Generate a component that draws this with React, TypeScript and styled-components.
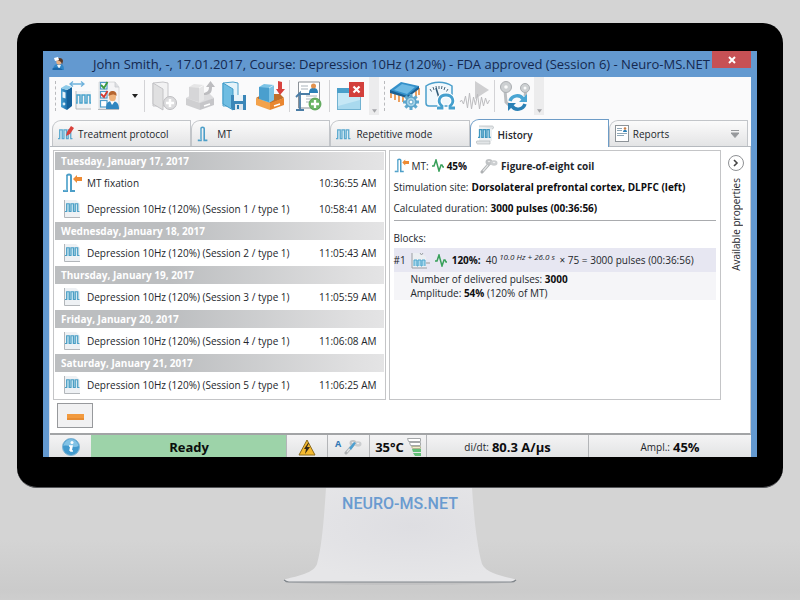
import React from 'react';
import styled, { createGlobalStyle, css } from 'styled-components';

const GlobalStyle = createGlobalStyle`
  * { box-sizing: border-box; }
  body {
    margin: 0;
    background: #d4d4d4;
    font-family: "Open Sans", "Noto Sans", sans-serif;
    font-size: 10px;
    line-height: 14px;
    color: #23262b;
  }
  button { font: inherit; color: inherit; }
  svg { display: block; flex: none; }
`;

const Page = styled.main`
  min-height: 100vh;
  padding-top: 23px;
  background: linear-gradient(#d4d4d4 540px, #cbcbcb 590px, #cecece);
  overflow: hidden;
`;
const Monitor = styled.section`
  margin: 0 17px;
  padding: 28px 26px 30px;
  background: #000;
  border-radius: 20px;
  border-bottom: 1px solid #55565a;
`;
const Screen = styled.div`
  background: #6399d0;
  padding: 0 6px;
`;
const TitleBar = styled.header`
  display: flex;
  align-items: center;
  height: 26px;
  padding: 0 0 0 3px;
  color: #14284f;
`;
const Title = styled.h1`
  flex: 1;
  margin: 0 0 0 27px;
  font-size: 13px;
  line-height: 26px;
  font-weight: 400;
  white-space: nowrap;
`;
const CloseButton = styled.button`
  flex: none;
  align-self: flex-start;
  display: grid;
  place-items: center;
  width: 39px;
  height: 17px;
  margin-left: -8px;
  padding: 0;
  border: 0;
  background: #c75155;
`;
const Client = styled.div`
  background: #fafafb;
  border-left: 1px solid #dfe3e8;
`;
const ToolbarRow = styled.div`
  display: flex;
  height: 38px;
`;
const Grip = styled.span`
  width: 3px;
  margin: 4px 0 4px 5px;
  border-left: 1px dashed #b9babd;
`;
const ToolGroup = styled.div`
  display: flex;
  align-items: center;
`;
const ToolButton = styled.button`
  display: grid;
  place-items: center;
  width: 35px;
  height: 38px;
  padding: 0;
  border: 0;
  background: none;
`;
const CaretButton = styled(ToolButton)`
  width: 14px;
`;
const Separator = styled.span`
  width: 1px;
  height: 32px;
  margin: 0 2px;
  background: #d3d3d6;
`;
const Overflow = styled.button`
  display: flex;
  align-items: flex-end;
  justify-content: center;
  width: 10px;
  height: 38px;
  margin-left: 2px;
  padding: 0 0 2px;
  border: 0;
  background: #ececed;
`;
const TabStrip = styled.div`
  display: flex;
  align-items: flex-end;
  height: 32px;
  padding: 0 3px 0 2px;
  border-bottom: 1px solid #b5b9be;
`;
const Tab = styled.button<{ $active?: boolean }>`
  flex: 1;
  display: flex;
  align-items: center;
  gap: 4px;
  height: 26px;
  padding: 0 8px 0 5px;
  border: 1px solid #c2c5c9;
  border-bottom: 0;
  border-radius: 9px 1px 0 0;
  background: linear-gradient(#fbfbfb, #ededee 60%, #e3e4e5);
  white-space: nowrap;
  ${p => p.$active && css`
    height: 28px;
    margin-bottom: -1px;
    padding-top: 3px;
    border-color: #6d9cc7;
    background: #fff;
    font-weight: 600;
  `}
`;
const TabMore = styled.span`
  margin-left: auto;
`;
const Body = styled.div`
  padding: 3px 0 5px 3px;
  background: #fff;
  border-right: 1px solid #c9ccd0;
  border-bottom: 2px solid #a2a4a6;
`;
const Columns = styled.div`
  display: grid;
  grid-template-columns: 1fr 1fr 26px;
  column-gap: 3px;
`;
const HistoryPanel = styled.section`
  border: 1px solid #c4c5c7;
  padding: 1px;
`;
const DayHeader = styled.h2`
  height: 18px;
  margin: 0;
  padding-left: 6px;
  font-size: 10px;
  line-height: 18px;
  font-weight: 700;
  color: #fff;
  background: linear-gradient(90deg, #bcbec0 35%, #dfdfe0 90%, #e4e4e5);
`;
const Entries = styled.ul`
  margin: 0;
  padding: 0;
  list-style: none;
`;
const Entry = styled.li`
  display: flex;
  align-items: center;
  height: 26px;
  padding: 0 7px 0 6px;
  white-space: nowrap;
`;
const EntryIcon = styled.span`
  display: grid;
  place-items: center;
  width: 22px;
  margin-right: 4px;
`;
const EntryTime = styled.time`
  margin-left: auto;
`;
const DetailPanel = styled.section`
  border: 1px solid #c4c5c7;
  padding: 4px 4px 0;
  white-space: nowrap;
`;
const InfoRow = styled.p`
  display: flex;
  align-items: center;
  gap: 3px;
  height: 21px;
  margin: 0;
`;
const CoilName = styled.span`
  display: flex;
  align-items: center;
  gap: 3px;
  margin-left: 10px;
  font-weight: 700;
`;
const Rule = styled.hr`
  margin: 2px 0 10px;
  border: 0;
  border-top: 1px solid #a9abae;
`;
const BlocksLabel = styled.h3`
  height: 17px;
  margin: 0;
  font-size: 10px;
  line-height: 14px;
  font-weight: 400;
`;
const BlockRow = styled.div`
  display: flex;
  align-items: center;
  gap: 5px;
  height: 24px;
  background: #e7e7f2;
`;
const Formula = styled.span`
  sup {
    font-size: 8px;
    line-height: 0;
    font-style: italic;
    vertical-align: 4px;
    margin: 0 2px;
  }
`;
const BlockDetails = styled.div`
  padding: 0 0 0 17px;
  background: #f5f5f8;
`;
const Side = styled.aside`
  display: flex;
  flex-direction: column;
  align-items: center;
  gap: 7px;
  padding: 5px 3px 0 0;
`;
const RoundButton = styled.button`
  display: grid;
  place-items: center;
  width: 16px;
  height: 16px;
  padding: 0;
  border: 1px solid #8f9194;
  border-radius: 50%;
  background: #fff;
`;
const SideLabel = styled.span`
  writing-mode: vertical-rl;
  transform: rotate(180deg);
  white-space: nowrap;
`;
const RemoveButton = styled.button`
  display: grid;
  place-items: center;
  width: 36px;
  height: 25px;
  margin: 3px 0 0 4px;
  padding: 3px 0 0;
  border: 1px solid #97999c;
  background: #f1f1f2;
`;
const StatusBar = styled.footer`
  display: flex;
  height: 22px;
  background: linear-gradient(#f4f4f5, #e2e3e4);
  white-space: nowrap;
`;
const StatusCell = styled.div<{ $basis?: number; $grow?: number }>`
  display: flex;
  align-items: center;
  justify-content: center;
  gap: 3px;
  flex: ${p => p.$grow ?? 0} 0 ${p => p.$basis ?? 0}px;
  padding-top: 2px;
  border-left: 1px solid #b3b5b8;
  &:first-child { border-left: 0; }
`;
const ReadyCell = styled(StatusCell)`
  background: #9dd3a9;
  border-color: #9dd3a9;
  font-size: 13px;
  font-weight: 700;
  color: #0b0d0c;
`;
const Big = styled.strong`
  font-size: 13px;
  font-weight: 700;
  color: #0d0d0f;
`;
const CoilMode = styled.span`
  align-self: flex-start;
  font-size: 9px;
  font-weight: 700;
  color: #2f77b5;
`;
const Strong = styled.strong`
  font-weight: 700;
  color: #0d0d0f;
`;
const Stand = styled.div`
  display: grid;
  justify-items: center;
  > * { grid-area: 1 / 1; }
`;
const Brand = styled.p`
  z-index: 1;
  margin: 6px 0 0;
  font-family: Roboto, "Open Sans", sans-serif;
  font-size: 16px;
  line-height: 20px;
  font-weight: 500;
  color: #6a9bd0;
`;

/* ---------- icons ---------- */

const TrainPath = 'M0 12h2V1h3v11h2V1h3v11h2V1h3v11h2';

const UserIcon = () => (
  <svg width="14" height="14" viewBox="0 0 14 14">
    <path d="M1 13c0-4 2-6 6-6s5 2 5 6z" fill="#2f86c8" />
    <path d="M5 8l2 4 2-4z" fill="#e8f3fb" />
    <ellipse cx="7" cy="4.500" rx="2.700" ry="3.300" fill="#e9b184" />
    <path d="M5 2c2-2 6-1 6 2l-1 4c0-3-2-4-5-5z" fill="#5b3a27" />
    <path d="M2 1l4-1 1 3-4 1z" fill="#fff" />
    <path d="M0 12c3-2 7-2 11 1H1z" fill="#1a66a9" />
  </svg>
);

const ProtocolIcon = () => (
  <svg width="32" height="32" viewBox="0 0 32 32">
    <defs>
      <linearGradient id="binder" x2="1"><stop stopColor="#4aa3d6" /><stop offset="1" stopColor="#1c6fab" /></linearGradient>
    </defs>
    <path d="M10 4h14M13 1.500L10 4l3 2.500M21 1.500L24 4l-3 2.500" fill="none" stroke="#6fb2dc" strokeWidth="1.300" />
    <path d="M1 8l6 2v20l-6-3z" fill="url(#binder)" />
    <path d="M7 10l5-3v19l-5 4z" fill="#14609a" />
    <path d="M1 8l5-3 6 2-5 3z" fill="#8fcbe9" />
    <path d="M2.500 11.500l3 1v6l-3-1z" fill="#e7f3fa" />
    <circle cx="4" cy="24" r="1.400" fill="#d7ecf8" />
    <path d="M16 11h15v18H16z" fill="#f1f3f5" />
    <path d="M16 11v18h15" fill="none" stroke="#b6babe" />
    <path d="M16 23h1v-8h3v8h2v-8h3v8h2v-8h3v8h1" fill="none" stroke="#48a3cc" strokeWidth="1.500" />
  </svg>
);

const ChecklistIcon = () => (
  <svg width="32" height="32" viewBox="0 0 32 32">
    <path d="M4 2h16l4 5v22H4z" fill="#f4f4f6" stroke="#d0d3d6" strokeWidth=".8" />
    <path d="M20 2v5h4" fill="#dcdee1" stroke="#c9ccd0" strokeWidth=".8" />
    {[2, 11, 20].map(y => (
      <rect key={y} x="5.500" y={y + 0.5} width="6.500" height="6.500" fill="#fff" stroke="#4f9cc9" strokeWidth="1.200" />
    ))}
    <path d="M6 5l3 3 3.500-6" fill="none" stroke="#3c9a3f" strokeWidth="1.800" />
    <path d="M6 14l3 3 3.500-6" fill="none" stroke="#d33a31" strokeWidth="1.800" />
    <path d="M11 29c0-6 2-8 6-8s7 2 7 8z" fill="#2f86c0" />
    <path d="M15 21l2 4 3-4z" fill="#fff" />
    <ellipse cx="17.500" cy="17" rx="3.500" ry="4.200" fill="#eeb27b" />
    <path d="M13.500 16c0-4 2-5 4-5s4.500 1 4 5c-2-2-5-2-8 0z" fill="#b5652f" />
    <path d="M3 29.500h21" stroke="#a8adb2" strokeWidth=".8" />
  </svg>
);

const Sheet = ({ a, b, s }: { a: string; b: string; s: string }) => (
  <g stroke={s} strokeWidth=".9" strokeLinejoin="round">
    <path d="M4 3l10-1 5 1v21l-5 2H4z" fill={b} />
    <path d="M4 3l10 6v21L4 24z" fill={a} />
  </g>
);

const AddFolderIcon = () => (
  <svg width="32" height="32" viewBox="0 0 32 32">
    <Sheet a="#e0e0e1" b="#f2f2f3" s="#c0c0c3" />
    <circle cx="21" cy="23" r="6.500" fill="#dcdcde" stroke="#bebec1" />
    <path d="M21 19v8M17 23h8" stroke="#fff" strokeWidth="2.500" />
  </svg>
);

const Tray = ({ paper, dark, front, side, inner, arrow, up }: {
  paper: string; dark: string; front: string; side: string; inner: string; arrow: string; up?: boolean;
}) => (
  <svg width="32" height="32" viewBox="0 0 32 32">
    <path d="M2 18l7-4h17l4 4-14 6z" fill={inner} />
    <path d="M5 7l5-3 10 1v15l-5 3-10-3z" fill={paper} />
    <path d="M5 7l10 1v14L5 19z" fill={dark} />
    <path d="M15 8l5-3" stroke="#fff" strokeOpacity=".6" />
    <path d="M2 18l14 5v7L2 25z" fill={front} />
    <path d="M16 23l14-5v7l-14 5z" fill={side} />
    <path d="M20 26l6-2" stroke="#fff" strokeWidth="1.500" />
    {up
      ? <path d="M20 13c4-1 5-3 5-6h-3l4.500-6L31 7h-3c0 6-2 8-8 8z" fill={arrow} />
      : <path d="M24 1l4 1v7h3l-5 6-4-6h2z" fill={arrow} />}
  </svg>
);

const SaveIcon = () => (
  <svg width="32" height="32" viewBox="0 0 32 32">
    <Sheet a="#6fbde2" b="#e4f3fa" s="#3a97c6" />
    <path d="M12 15h15v15H14l-2-2z" fill="#3a86b8" />
    <path d="M15 15h9v6h-9z" fill="#e9f3f9" />
    <path d="M16 24h8v6h-8z" fill="#dce6ee" />
    <path d="M18 25h2v4h-2z" fill="#2a79ad" />
  </svg>
);

const ReportAddIcon = () => (
  <svg width="32" height="32" viewBox="0 0 32 32">
    <path d="M4.500 2h21v26h-21z" fill="#fff" stroke="#8b9197" />
    <path d="M7 6h7M7 9h7M12 16h11M12 19h11M12 22h4" stroke="#a9b3bb" />
    <path d="M15 13c0-4 2-5 4.500-5s4.500 1 4.500 5z" fill="#2c81b8" />
    <circle cx="19.500" cy="6" r="2.500" fill="#e2924f" />
    <path d="M2 17l4-4v16M2 30h8M6 14h10" fill="none" stroke="#4a7da6" strokeWidth="1.800" />
    <circle cx="21" cy="24" r="6" fill="#6bb566" stroke="#4b9a49" strokeWidth=".8" />
    <path d="M21 20v8M17 24h8" stroke="#fff" strokeWidth="2.300" />
  </svg>
);

const CloseWindowIcon = () => (
  <svg width="32" height="32" viewBox="0 0 32 32">
    <rect x="3.500" y="8.500" width="23" height="21" fill="#a9d9ee" stroke="#71b2d1" />
    <path d="M3 8h24v5H3z" fill="#4a9fca" />
    <path d="M4 13h22v7L4 26z" fill="#c5e7f5" />
    <rect x="15" y="2" width="15" height="15" fill="#d3403c" />
    <path d="M19.500 6.500l6 6M25.500 6.500l-6 6" stroke="#fff" strokeWidth="2.200" />
  </svg>
);

const gearTeeth = Array.from({ length: 8 }, (_, i) => i * 45);

const ChipIcon = () => (
  <svg width="32" height="32" viewBox="0 0 32 32">
    <path d="M2 11v7M6 13v7M10 14v8M14 15v7M27 9v8M30 8v7" stroke="#ea9247" strokeWidth="1.700" />
    <path d="M1 10v3l17 5 12-9V6z" fill="#1b5f92" />
    <path d="M1 10L12 2l18 4-12 10z" fill="#3490ca" />
    <path d="M5 10l8-6 13 3-8 7z" fill="#6db9e4" />
    <g transform="translate(22 22)">
      {gearTeeth.map(r => <rect key={r} x="-1.500" y="-8" width="3" height="4" fill="#5fa8ce" transform={`rotate(${r})`} />)}
      <circle r="5" fill="#a3d0e6" stroke="#5aa3ca" strokeWidth="1.500" />
      <circle r="2" fill="#fff" stroke="#5aa3ca" />
    </g>
  </svg>
);

const ImpedanceIcon = () => (
  <svg width="32" height="32" viewBox="0 0 32 32">
    <path d="M2 6c7-5 19-5 26 0v17c0 2-1 3-3 3H5c-2 0-3-1-3-3z" fill="#f1f8fc" stroke="#4a9ecb" strokeWidth="1.500" />
    <path d="M6 9l1.500 2.500M9 7l1 3M12 6l.5 3M15 6v3M18 6l-.5 3M21 7l-1 3M24 9l-1.500 2.500" stroke="#4a6478" strokeWidth="1" />
    <path d="M12 8l4 13" stroke="#2f5b78" strokeWidth="1.600" />
    <path d="M13 28h5v-2c-5-4-3-11 4-11s9 7 4 11v2h5" fill="none" stroke="#fff" strokeWidth="5" />
    <path d="M13 28h5v-2c-5-4-3-11 4-11s9 7 4 11v2h5" fill="none" stroke="#45a0ce" strokeWidth="2.800" />
  </svg>
);

const EmgPlayIcon = () => (
  <svg width="32" height="32" viewBox="0 0 32 32">
    <path d="M16 1l14 9-14 9z" fill="#cfcfd1" />
    <path d="M1 22l1.500-2 2 4 2-8 2 12 2-15 2 16 2-12 2 8 2-11 2 15 2-12 2 9 2-8 2 6 2-4" fill="none" stroke="#bcbcbf" />
  </svg>
);

const CoilSwapIcon = () => (
  <svg width="32" height="32" viewBox="0 0 32 32">
    <path d="M6 10l1 12 4 4M27 10l-1 6" fill="none" stroke="#bbbec1" strokeWidth="3" />
    <circle cx="7" cy="7" r="5.500" fill="#cdd0d2" stroke="#acafb2" />
    <circle cx="7" cy="7" r="1.800" fill="#fafafa" />
    <circle cx="26" cy="8" r="4.500" fill="#cdd0d2" stroke="#acafb2" />
    <circle cx="26" cy="8" r="1.500" fill="#fafafa" />
    <path d="M11 21c2-6 10-7 13-2" fill="none" stroke="#4aa5d3" strokeWidth="3.500" />
    <path d="M28 14v8h-8z" fill="#4aa5d3" />
    <path d="M26 24c-2 6-10 7-13 2" fill="none" stroke="#2a80b5" strokeWidth="3.500" />
    <path d="M9 31v-8h8z" fill="#2a80b5" />
  </svg>
);

const PulseSteps = ({ arrow, size = 20 }: { arrow?: boolean; size?: number }) => (
  <svg width={size} height={size} viewBox="0 0 20 20">
    <path d="M1 18h4V3c0-2 4-2 4 0v15h4" fill="none" stroke="#4c9ec8" strokeWidth="2" />
    <path d="M2 17h3V3" fill="none" stroke="#a9d5ea" strokeWidth=".7" />
    {arrow && <path d="M11 6l4-4v2h5v4h-5v2z" fill="#ee8b34" />}
  </svg>
);

const TrainSheet = () => (
  <svg width="18" height="20" viewBox="0 0 18 20">
    <path d="M2 1h11l4 4v13H2z" fill="#eef1f4" />
    <path d="M1.500 1v17.500H17" fill="none" stroke="#b2b6ba" />
    <path transform="translate(2 4) scale(.85 .7)" d={TrainPath} fill="#cfe8f3" stroke="#4a9fc5" strokeWidth="1.500" />
  </svg>
);

const TrainIcon = ({ pencil }: { pencil?: boolean }) => (
  <svg width="16" height="16" viewBox="0 0 16 16">
    <path transform="translate(0 3) scale(.85 .8)" d={TrainPath} fill="#d9edf6" stroke="#5aa8ce" strokeWidth="1.500" />
    {pencil && <path d="M8 10l1-4 4-6 3 2-4 6z" fill="#d9403a" />}
  </svg>
);

const ScrollIcon = () => (
  <svg width="18" height="20" viewBox="0 0 18 20">
    <path d="M3 1h13c2 0 2 3 0 3v12H3z" fill="#edf0f2" />
    <path d="M3 1h13c2 0 2 3 0 3M1 16h13v3H2c-2 0-2-3-1-3z" fill="#e2e5e7" stroke="#b6babd" strokeWidth=".7" />
    <path transform="translate(2 4) scale(.75 .7)" d={TrainPath} fill="#cfe8f3" stroke="#3f97c0" strokeWidth="1.700" />
  </svg>
);

const ReportIcon = () => (
  <svg width="14" height="17" viewBox="0 0 14 17">
    <rect x=".5" y=".5" width="13" height="16" fill="#fff" stroke="#8d9398" />
    <path d="M2 3.500h5M2 5.500h5M2 8.500h10M2 10.500h7" stroke="#8fa7b7" />
    <path d="M8 7c0-3 4-3 4 0z" fill="#2e82b8" />
    <circle cx="10" cy="3.500" r="1.300" fill="#c87b45" />
  </svg>
);

const GreenPulse = () => (
  <svg width="12" height="13" viewBox="0 0 12 13">
    <path d="M0 7h2l2-6 3 11 2-6h1l1 2h1" fill="none" stroke="#38a05a" strokeWidth="1.500" />
  </svg>
);

const CoilIcon = ({ blue }: { blue?: boolean }) => (
  <svg width="18" height="16" viewBox="0 0 18 16">
    <path d="M2 14l7-8" stroke="#aeb1b3" strokeWidth="3" strokeLinecap="round" />
    <path d="M3 13l5-6" stroke="#e3e5e6" strokeWidth="1.200" />
    <ellipse cx="9" cy="4" rx="3.500" ry="3" fill="#bfc2c4" />
    <ellipse cx="14" cy="5" rx="3.500" ry="2.800" fill="#cbced0" />
    <ellipse cx="9" cy="3.500" rx="1.300" ry=".8" fill="#e9eaeb" />
    <ellipse cx="14" cy="4.500" rx="1.300" ry=".8" fill="#efeff0" />
    {blue && <path d="M5 9l5-6 2 1-5 7z" fill="#4c9fd0" />}
  </svg>
);

const BlockIcon = () => (
  <svg width="19" height="17" viewBox="0 0 19 17">
    <path d="M1 1h9l5 4v10H1z" fill="#eceff2" />
    <path d="M1 1v15h15M9 1l1.500 2L12 1" fill="none" stroke="#9a9ea2" />
    <path d="M3 14V8h3v6h1V8h3v6h1V8h3v6" fill="#a9d8ec" stroke="#4ba5cd" />
    <path d="M15 11h4" stroke="#999" />
  </svg>
);

const InfoIcon = () => (
  <svg width="18" height="18" viewBox="0 0 18 18">
    <circle cx="9" cy="9" r="8.500" fill="#4199cd" stroke="#7fb4d4" />
    <path d="M1.500 8C3-1 15-1 16.500 8 12 11 6 6 1.500 8z" fill="#82c2e5" />
    <circle cx="10" cy="4.500" r="1.500" fill="#fff" />
    <path d="M7 8h3l-1 5h2M9 8l-1 5" fill="none" stroke="#fff" strokeWidth="1.600" />
  </svg>
);

const WarningIcon = () => (
  <svg width="18" height="17" viewBox="0 0 18 17">
    <path d="M9 1l8 15H1z" fill="#f4b92e" stroke="#8b6a1d" strokeLinejoin="round" />
    <path d="M10 4L6 10h2l-1 5 5-7h-3l2-4z" fill="#35291a" />
  </svg>
);

const LevelIcon = () => (
  <svg width="14" height="18" viewBox="0 0 14 18">
    <path d="M.5.5h13v3H1.500zM2.500 4.500h11v3h-10z" fill="#fff" stroke="#a5a8aa" />
    <path d="M4.500 8.500h9v2h-8z" fill="#f2edcc" stroke="#b5b596" />
    <path d="M5 11h9v3H6zM6 15h8v3H8z" fill="#62bf78" />
  </svg>
);

const DownGlyph = ({ width = 6, fill = '#222' }: { width?: number; fill?: string }) => (
  <svg width={width} height="4" viewBox="0 0 6 4"><path d="M0 0h6L3 4z" fill={fill} /></svg>
);

/* ---------- data ---------- */

const days = [
  { day: 'Tuesday, January 17, 2017', items: [
    { name: 'MT fixation', time: '10:36:55 AM', mt: true },
    { name: 'Depression 10Hz (120%) (Session 1 / type 1)', time: '10:58:41 AM' },
  ] },
  { day: 'Wednesday, January 18, 2017', items: [{ name: 'Depression 10Hz (120%) (Session 2 / type 1)', time: '11:05:43 AM' }] },
  { day: 'Thursday, January 19, 2017', items: [{ name: 'Depression 10Hz (120%) (Session 3 / type 1)', time: '11:05:59 AM' }] },
  { day: 'Friday, January 20, 2017', items: [{ name: 'Depression 10Hz (120%) (Session 4 / type 1)', time: '11:06:08 AM' }] },
  { day: 'Saturday, January 21, 2017', items: [{ name: 'Depression 10Hz (120%) (Session 5 / type 1)', time: '11:06:25 AM' }] },
] as { day: string; items: { name: string; time: string; mt?: boolean }[] }[];

const tabs = [
  { label: 'Treatment protocol', icon: <TrainIcon pencil /> },
  { label: 'MT', icon: <PulseSteps size={16} /> },
  { label: 'Repetitive mode', icon: <TrainIcon /> },
  { label: 'History', icon: <ScrollIcon />, active: true },
  { label: 'Reports', icon: <ReportIcon />, more: true },
];

const Toolbar = () => (
  <ToolbarRow>
    <Grip />
    <ToolGroup role="toolbar" aria-label="Session">
      <ToolButton aria-label="Protocols"><ProtocolIcon /></ToolButton>
      <ToolButton aria-label="Patient checklist"><ChecklistIcon /></ToolButton>
      <CaretButton aria-label="More checklists"><DownGlyph /></CaretButton>
      <Separator />
      <ToolButton aria-label="New folder" disabled><AddFolderIcon /></ToolButton>
      <ToolButton aria-label="Check out" disabled>
        <Tray up paper="#e6e6e7" dark="#d6d6d8" front="#cfcfd1" side="#c6c6c9" inner="#dcdcde" arrow="#bdbdc0" />
      </ToolButton>
      <ToolButton aria-label="Save"><SaveIcon /></ToolButton>
      <ToolButton aria-label="Archive">
        <Tray paper="#7cc3e6" dark="#4a9fce" front="#f3a24b" side="#e98631" inner="#c06f2a" arrow="#d8433f" />
      </ToolButton>
      <Separator />
      <ToolButton aria-label="Add report"><ReportAddIcon /></ToolButton>
      <Separator />
      <ToolButton aria-label="Close window"><CloseWindowIcon /></ToolButton>
      <Overflow aria-label="Session options"><DownGlyph width={5} fill="#a4a5a8" /></Overflow>
    </ToolGroup>
    <Grip />
    <ToolGroup role="toolbar" aria-label="Device">
      <ToolButton aria-label="Stimulator setup"><ChipIcon /></ToolButton>
      <ToolButton aria-label="Impedance"><ImpedanceIcon /></ToolButton>
      <ToolButton aria-label="EMG monitoring" disabled><EmgPlayIcon /></ToolButton>
      <Separator />
      <ToolButton aria-label="Change coil"><CoilSwapIcon /></ToolButton>
      <Overflow aria-label="Device options"><DownGlyph width={5} fill="#a4a5a8" /></Overflow>
    </ToolGroup>
  </ToolbarRow>
);

const History = () => (
  <HistoryPanel>
    {days.map(d => (
      <React.Fragment key={d.day}>
        <DayHeader>{d.day}</DayHeader>
        <Entries>
          {d.items.map(item => (
            <Entry key={item.time}>
              <EntryIcon>{item.mt ? <PulseSteps arrow /> : <TrainSheet />}</EntryIcon>
              <span>{item.name}</span>
              <EntryTime>{item.time}</EntryTime>
            </Entry>
          ))}
        </Entries>
      </React.Fragment>
    ))}
  </HistoryPanel>
);

const Details = () => (
  <DetailPanel>
    <InfoRow>
      <PulseSteps arrow size={15} /><span>MT:</span>
      <GreenPulse /><Strong>45%</Strong>
      <CoilName><CoilIcon />Figure-of-eight coil</CoilName>
    </InfoRow>
    <InfoRow><span>Stimulation site:</span><Strong>Dorsolateral prefrontal cortex, DLPFC (left)</Strong></InfoRow>
    <InfoRow><span>Calculated duration:</span><Strong>3000 pulses (00:36:56)</Strong></InfoRow>
    <Rule />
    <BlocksLabel>Blocks:</BlocksLabel>
    <BlockRow>
      <span>#1</span><BlockIcon /><GreenPulse /><Strong>120%:</Strong>
      <Formula>40<sup>10.0 Hz + 26.0 s</sup> × 75 = 3000 pulses (00:36:56)</Formula>
    </BlockRow>
    <BlockDetails>
      <div>Number of delivered pulses: <Strong>3000</Strong></div>
      <div>Amplitude: <Strong>54%</Strong> (120% of MT)</div>
    </BlockDetails>
  </DetailPanel>
);

export default function App() {
  return (
    <Page>
      <GlobalStyle />
      <Monitor>
        <Screen>
          <TitleBar>
            <UserIcon />
            <Title>John Smith, -, 17.01.2017, Course: Depression 10Hz (120%) - FDA approved (Session 6) - Neuro-MS.NET</Title>
            <CloseButton aria-label="Close">
              <svg width="8" height="8" viewBox="0 0 8 8"><path d="M1 1l6 6M7 1L1 7" stroke="#fff" strokeWidth="2" /></svg>
            </CloseButton>
          </TitleBar>
          <Client>
            <Toolbar />
            <TabStrip role="tablist">
              {tabs.map(t => (
                <Tab key={t.label} role="tab" aria-selected={!!t.active} $active={t.active}>
                  {t.icon}<span>{t.label}</span>
                  {t.more && (
                    <TabMore>
                      <svg width="8" height="8" viewBox="0 0 8 8"><path d="M0 .5h8M0 3h8L4 7.500z" fill="#96989b" stroke="#96989b" /></svg>
                    </TabMore>
                  )}
                </Tab>
              ))}
            </TabStrip>
            <Body>
              <Columns>
                <History />
                <Details />
                <Side>
                  <RoundButton aria-label="Expand properties">
                    <svg width="6" height="8" viewBox="0 0 6 8"><path d="M1 1l3 3-3 3" fill="none" stroke="#444" strokeWidth="1.600" /></svg>
                  </RoundButton>
                  <SideLabel>Available properties</SideLabel>
                </Side>
              </Columns>
              <RemoveButton aria-label="Remove">
                <svg width="17" height="6" viewBox="0 0 17 6"><rect width="17" height="6" fill="#f29a3e" /><path d="M0 5h17" stroke="#dc7f26" /></svg>
              </RemoveButton>
            </Body>
            <StatusBar>
              <StatusCell $basis={41}><InfoIcon /></StatusCell>
              <ReadyCell $basis={195} $grow={1}>Ready</ReadyCell>
              <StatusCell $basis={41}><WarningIcon /></StatusCell>
              <StatusCell $basis={42}><CoilMode>A</CoilMode><CoilIcon blue /></StatusCell>
              <StatusCell $basis={57}><Big>35°C</Big><LevelIcon /></StatusCell>
              <StatusCell $basis={162} $grow={1}><span>di/dt:</span><Big>80.3 A/µs</Big></StatusCell>
              <StatusCell $basis={163} $grow={1}><span>Ampl.:</span><Big>45%</Big></StatusCell>
            </StatusBar>
          </Client>
        </Screen>
      </Monitor>
      <Stand>
        <svg width="234" height="98" viewBox="0 0 234 98">
          <defs>
            <radialGradient id="stand" cx=".55" cy=".4" r=".6">
              <stop offset="0" stopColor="#dedee2" /><stop offset="1" stopColor="#e6e6e8" />
            </radialGradient>
          </defs>
          <ellipse cx="117" cy="94" rx="108" ry="3" fill="#c2c2c3" />
          <path d="M43 0h146c2 30 5 58 10 76 4 9 20 12 32 15 4 2 2 3-2 3H5c-5 0-6-1-2-3 12-3 28-6 31-15 5-18 7-46 9-76z" fill="url(#stand)" />
          <path d="M1 92c1 1 3 2 5 2h222c3 0 4-1 5-2" fill="none" stroke="#80868b" strokeWidth="1.200" />
        </svg>
        <Brand>NEURO-MS.NET</Brand>
      </Stand>
    </Page>
  );
}
